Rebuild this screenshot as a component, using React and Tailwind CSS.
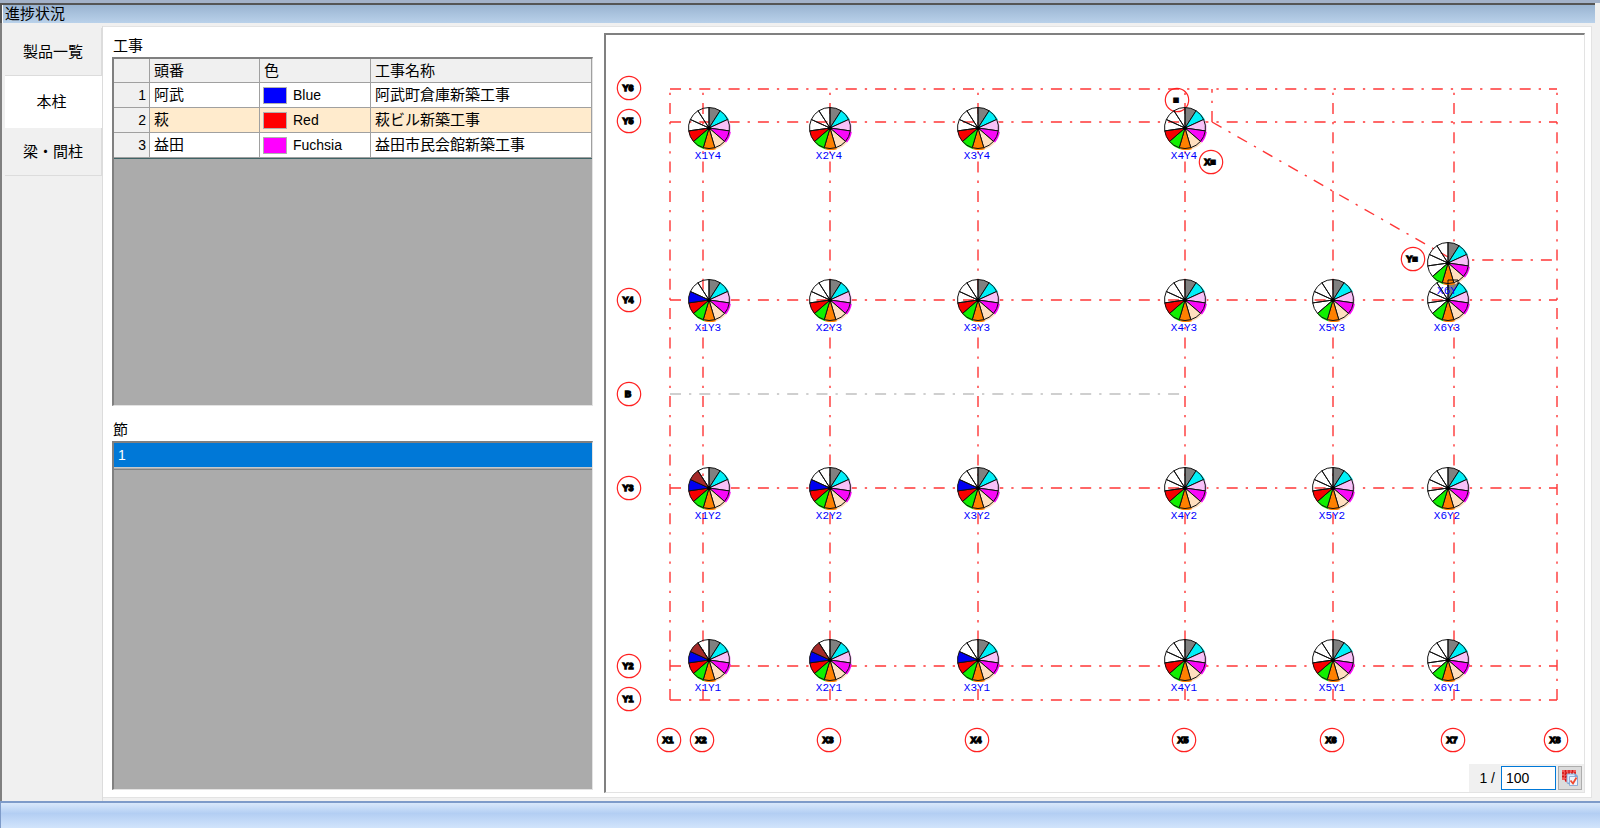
import React from "react";

const JP = "font-['Liberation_Sans','Noto_Sans_CJK_JP',sans-serif]";

const works = [
  { id: 1, code: "阿武", color: "Blue", swatch: "bg-[#0000ff]", name: "阿武町倉庫新築工事" },
  { id: 2, code: "萩", color: "Red", swatch: "bg-[#ff0000]", name: "萩ビル新築工事" },
  { id: 3, code: "益田", color: "Fuchsia", swatch: "bg-[#ff00ff]", name: "益田市民会館新築工事" },
];

const SLICES = [
  "#808080",
  "#00f0f8",
  "#f8c0f8",
  "#f808f8",
  "#ffdfbf",
  "#ff8000",
  "#10f000",
  "#f80000",
  "#0000f0",
  "#a52a2a",
  null,
];

// "filled" is the number of finished steps, counted clockwise from the top.
const columns = [
  { x: 709, y: 128, label: "X1Y4", filled: 8 },
  { x: 830, y: 128, label: "X2Y4", filled: 8 },
  { x: 978, y: 128, label: "X3Y4", filled: 8 },
  { x: 1185, y: 128, label: "X4Y4", filled: 8 },
  { x: 709, y: 300, label: "X1Y3", filled: 9 },
  { x: 830, y: 300, label: "X2Y3", filled: 8 },
  { x: 978, y: 300, label: "X3Y3", filled: 8 },
  { x: 1185, y: 300, label: "X4Y3", filled: 8 },
  { x: 1333, y: 300, label: "X5Y3", filled: 7 },
  { x: 1448, y: 300, label: "X6Y3", filled: 7 },
  { x: 1448, y: 263, label: "X6Y", filled: 7 },
  { x: 709, y: 488, label: "X1Y2", filled: 10 },
  { x: 830, y: 488, label: "X2Y2", filled: 9 },
  { x: 978, y: 488, label: "X3Y2", filled: 9 },
  { x: 1185, y: 488, label: "X4Y2", filled: 8 },
  { x: 1333, y: 488, label: "X5Y2", filled: 8 },
  { x: 1448, y: 488, label: "X6Y2", filled: 7 },
  { x: 709, y: 660, label: "X1Y1", filled: 10 },
  { x: 830, y: 660, label: "X2Y1", filled: 10 },
  { x: 978, y: 660, label: "X3Y1", filled: 9 },
  { x: 1185, y: 660, label: "X4Y1", filled: 8 },
  { x: 1333, y: 660, label: "X5Y1", filled: 8 },
  { x: 1448, y: 660, label: "X6Y1", filled: 7 },
];

const bubbles = [
  { x: 629, y: 88, t: "Y6" },
  { x: 629, y: 121, t: "Y5" },
  { x: 629, y: 300, t: "Y4" },
  { x: 629, y: 394, t: "B" },
  { x: 629, y: 488, t: "Y3" },
  { x: 629, y: 666, t: "Y2" },
  { x: 629, y: 699, t: "Y1" },
  { x: 669, y: 740, t: "X1" },
  { x: 702, y: 740, t: "X2" },
  { x: 829, y: 740, t: "X3" },
  { x: 977, y: 740, t: "X4" },
  { x: 1184, y: 740, t: "X5" },
  { x: 1332, y: 740, t: "X6" },
  { x: 1453, y: 740, t: "X7" },
  { x: 1556, y: 740, t: "X8" },
  { x: 1177, y: 100, t: "■" },
  { x: 1211, y: 162, t: "X■" },
  { x: 1413, y: 259, t: "Y■" },
];

const gridX = [670, 703, 830, 978, 1185, 1333, 1454, 1557];
const gridY = [89, 122, 300, 488, 666, 700];

function slicePath(cx, cy, r, i) {
  const step = (Math.PI * 2) / 11;
  const p = (a) => `${(cx + r * Math.sin(a)).toFixed(2)} ${(cy - r * Math.cos(a)).toFixed(2)}`;
  return `M${cx} ${cy}L${p(i * step)}A${r} ${r} 0 0 1 ${p((i + 1) * step)}Z`;
}

function Pie({ x, y, filled, label }) {
  const shown = SLICES.slice(0, filled);
  return (
    <g>
      {shown.map((c, i) => (
        <path key={`s${i}`} d={slicePath(x + 1, y + 1, 21, i)} fill={c} />
      ))}
      {SLICES.map((c, i) => (
        <path
          key={i}
          d={slicePath(x, y, 20.5, i)}
          fill={i < filled ? c : "none"}
          stroke="#111"
          strokeWidth="1"
        />
      ))}
      <circle cx={x} cy={y} r="2" fill="#000" />
      <text
        x={x - 1}
        y={y + 31}
        textAnchor="middle"
        fill="#0000ff"
        className="font-['Liberation_Mono',monospace] text-[11px]"
      >
        {label}
      </text>
    </g>
  );
}

function Diagram() {
  return (
    <svg viewBox="606 35 978 757" className="block h-auto w-full" role="img" aria-label="本柱">
      <g stroke="#ff3636" strokeWidth="1.4" strokeDasharray="11 8 2.3 8" fill="none">
        {gridX.map((x) => (
          <path key={x} d={`M${x} 700V89`} />
        ))}
        {gridY.map((y) => (
          <path key={y} d={`M670 ${y}H1557`} />
        ))}
        <path d="M1212 122V89" />
        <path d="M1453 260H1557" />
        <path d="M1212 122L1448 257" />
        <path d="M670 394H1185" stroke="#c0c0c0" />
      </g>
      {bubbles.map((b) => (
        <g key={b.t}>
          <circle cx={b.x} cy={b.y} r="11.7" fill="none" stroke="#ff2020" strokeWidth="1.2" />
          <text
            x={b.x - 1}
            y={b.y + 3}
            textAnchor="middle"
            stroke="#000"
            strokeWidth="1.3"
            className="font-['Liberation_Sans',sans-serif] text-[9px] font-bold"
          >
            {b.t}
          </text>
        </g>
      ))}
      {columns.map((c) => (
        <Pie key={`${c.x}-${c.y}`} {...c} />
      ))}
      <path d="M1448 290V280H1458V284" fill="none" stroke="#111" />
    </svg>
  );
}

function CheckListIcon() {
  return (
    <svg viewBox="0 0 18 18" className="h-[18px] w-[18px]" aria-hidden="true">
      <path d="M1 1h14v3h-8v9H4v-2H1z" fill="#f25a5a" />
      <path d="M1 4h14M1 7.500h6M4.500 1v12M8 1v3M11.500 1v3" stroke="#d01818" strokeWidth="1.300" strokeDasharray="2 1" />
      <path d="M6 14V5h9l2 2v9H9z" fill="#7fa8dc" />
      <path d="M6 5h8v9H6z" fill="#dbe9fa" stroke="#7c9fd0" strokeWidth=".8" />
      <path d="M8.500 7.500h8v9h-8z" fill="#edf4fd" stroke="#7c9fd0" strokeWidth=".8" />
      <path d="M9.500 11.500l2.500 3 3.500-6" fill="none" stroke="#f04a30" strokeWidth="1.800" />
    </svg>
  );
}

function Tab({ children, active }) {
  return (
    <button
      type="button"
      role="tab"
      aria-selected={!!active}
      className={
        active
          ? "h-[52px] w-full bg-white pr-1 text-[15px]"
          : "h-12 w-full border-r border-b border-[#dcdcdc] bg-[#f0f0f0] text-[15px]"
      }
    >
      {children}
    </button>
  );
}

const sunken =
  "min-h-0 flex-1 border-t-2 border-l-2 border-r border-b border-t-[#808080] border-l-[#808080] border-r-[#e3e3e3] border-b-[#e3e3e3] bg-[#ababab]";
const th = "border-r border-b border-[#a0a0a0] px-1 text-left font-normal";

export default function App() {
  return (
    <div className={`flex min-h-screen flex-col bg-[#f0f0f0] text-[15px] leading-5 text-black ${JP}`}>
      <div className="h-[3px] bg-[#a3b2c9]" />
      <div className="mr-[5px] border-t-2 border-l-2 border-[#555] bg-linear-to-b from-[#9ab4d1] to-[#b9d1ea]">
        <h1 className="h-[18px] border-l border-white pl-0.5 text-[15px] leading-[18px]">進捗状況</h1>
      </div>
      <main className="flex flex-1 border-l-2 border-[#808080] pt-[3px]">
        <div role="tablist" className="w-[101px] shrink-0 border-r border-[#dcdcdc] pt-0.5 pl-[3px]">
          <Tab>製品一覧</Tab>
          <Tab active>本柱</Tab>
          <Tab>梁・間柱</Tab>
        </div>
        <div className="mr-2 mb-[3px] flex flex-1 gap-[11px] border-t border-r border-b border-[#e3e3e3] bg-white pt-[6px] pr-[6px] pb-1 pl-[9px]">
          <div className="flex w-[481px] shrink-0 flex-col pb-[3px]">
            <h2 className="mt-[3px] mb-px h-5 pl-px">工事</h2>
            <div className={sunken}>
              <table className="w-full table-fixed border-separate border-spacing-0 border-b border-[#3f6466]">
                <colgroup>
                  <col className="w-9" />
                  <col className="w-[110px]" />
                  <col className="w-[111px]" />
                  <col />
                </colgroup>
                <thead>
                  <tr className="h-6 bg-[#f0f0f0]">
                    <th className={th} aria-label="番号" />
                    <th className={th}>頭番</th>
                    <th className={th}>色</th>
                    <th className={th}>工事名称</th>
                  </tr>
                </thead>
                <tbody className="leading-[18px]">
                  {works.map((w) => (
                    <tr key={w.id} className={w.id === 2 ? "h-[25px] bg-[#ffebcd]" : "h-[25px] bg-white"}>
                      <th className="border-r border-b border-[#a0a0a0] bg-[#f0f0f0] px-[3px] text-right text-sm leading-[18px] font-normal">
                        {w.id}
                      </th>
                      <td className="border-r border-b border-[#a0a0a0] px-1">{w.code}</td>
                      <td className="border-r border-b border-[#a0a0a0] px-[3px] text-sm leading-[18px]">
                        <span className="flex items-center gap-[6px]">
                          <span className={`h-[17px] w-6 border border-[#b0b0b0] ${w.swatch}`} />
                          {w.color}
                        </span>
                      </td>
                      <td className="border-r border-b border-[#a0a0a0] px-1">{w.name}</td>
                    </tr>
                  ))}
                </tbody>
              </table>
            </div>
            <h2 className="mt-[14px] mb-px h-5 pl-px">節</h2>
            <div className={sunken}>
              <ul className="border-b border-[#808080]">
                <li className="h-[25px] border-b border-[#c8c8c8] bg-[#0078d7] px-1 text-sm leading-6 text-white">
                  1
                </li>
                <li className="h-px bg-[#ababab]" aria-hidden="true" />
              </ul>
            </div>
          </div>
          <div className="relative flex-1 border-t-2 border-l-2 border-r border-b border-t-[#808080] border-l-[#808080] border-r-[#e3e3e3] border-b-[#e3e3e3] bg-white">
            <Diagram />
            <div className="absolute right-0 bottom-0 flex h-7 items-center gap-0.5 bg-[#f0f0f0] pr-0.5 pl-[10px]">
              <label htmlFor="scale" className="pr-1 text-sm whitespace-pre">
                1 /
              </label>
              <input
                id="scale"
                defaultValue="100"
                className="h-6 w-[55px] border border-[#0078d7] bg-white px-1 text-sm outline-none"
              />
              <button
                type="button"
                aria-label="更新"
                className="flex h-6 w-6 items-center justify-center border border-[#adadad] bg-[#dcdcdc]"
              >
                <CheckListIcon />
              </button>
            </div>
          </div>
        </div>
      </main>
      <footer className="h-7 border-t-2 border-l border-[#7e9bc9] bg-linear-to-b from-[#d9e8fb] via-[#b3cef3] via-40% to-[#d3e5fc]" />
    </div>
  );
}
